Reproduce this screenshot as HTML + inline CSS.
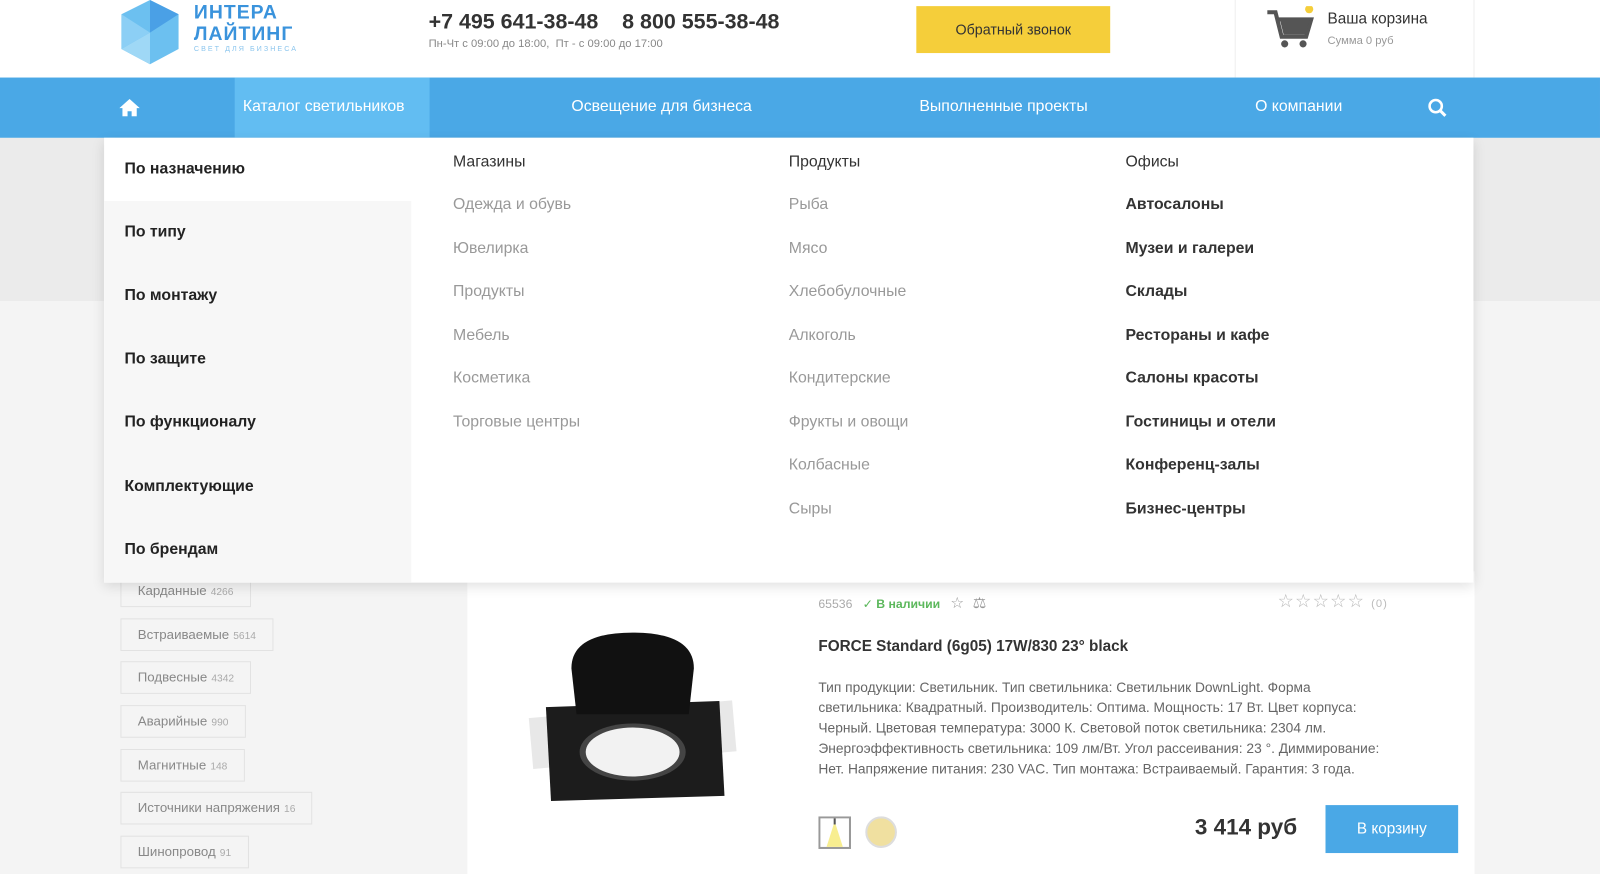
<!DOCTYPE html>
<html><head><meta charset="utf-8"><style>
*{margin:0;padding:0;box-sizing:border-box}
html,body{width:1600px;height:874px;overflow:hidden}
body{background:#f4f4f4;font-family:"Liberation Sans","DejaVu Sans",sans-serif;color:#333}
#w{position:relative;width:1568px;height:857px;transform:scale(1.0204);transform-origin:0 0}
.abs{position:absolute}
header{position:absolute;left:0;top:0;width:1568px;height:76px;background:#fff}
nav{position:absolute;left:0;top:76px;width:1568px;height:59px;background:#4aa8e6;color:#fff;font-size:15.5px}
nav span{position:absolute;top:20px}
.menu a{position:absolute;font-size:15.5px;text-decoration:none}
.tag{position:absolute;left:118px;height:32px;background:#f4f4f4;border:1px solid #e2e2e2;color:#888;font-size:13px;line-height:30px;padding:0 16px}
.tag small{font-size:10px;color:#aaa;margin-left:4px}
</style></head><body><div id="w">
<div class="abs" style="left:0;top:135px;width:1568px;height:160px;background:#ebebeb"></div>
<header>
<svg class="abs" style="left:117px;top:0" width="60" height="64" viewBox="0 0 60 64"><polygon points="30,0 58,14 58,48 30,63 2,48 2,14" fill="#6cc0f0"/><polygon points="30,0 58,14 30,32" fill="#4aa0e6"/><polygon points="2,48 30,32 30,63" fill="#9fd8f6"/><polygon points="2,14 30,32 2,48" fill="#8ccff5"/></svg>
<div class="abs" style="left:190px;top:2px;color:#3a93dc;font-weight:bold;font-size:19px;line-height:21px;letter-spacing:1px">ИНТЕРА<br>ЛАЙТИНГ</div>
<div class="abs" style="left:190px;top:45px;color:#8cc6ee;font-size:7px;letter-spacing:2px">СВЕТ ДЛЯ БИЗНЕСА</div>
<div class="abs" style="left:420px;top:10px;font-size:21px;font-weight:bold;color:#333">+7 495 641-38-48 &nbsp;&nbsp; 8 800 555-38-48</div>
<div class="abs" style="left:420px;top:37px;font-size:11px;color:#888">Пн-Чт с 09:00 до 18:00, &nbsp;Пт - с 09:00 до 17:00</div>
<div class="abs" style="left:898px;top:6px;width:190px;height:46px;background:#f5ce3a;font-size:14px;text-align:center;line-height:46px;color:#333">Обратный звонок</div>
<div class="abs" style="left:1210px;top:0;width:235px;height:76px;border-left:1px solid #eee;border-right:1px solid #eee"></div>
<svg class="abs" style="left:1240px;top:6px" width="48" height="42" viewBox="0 0 48 42"><path d="M2 6h8l6 24h24l5-17H13" fill="none" stroke="#555" stroke-width="4"/><path d="M14 12h30l-5 16H18z" fill="#555"/><circle cx="19" cy="37" r="3.5" fill="#555"/><circle cx="37" cy="37" r="3.5" fill="#555"/><circle cx="43" cy="3" r="4" fill="#f5ce3a"/></svg>
<div class="abs" style="left:1301px;top:10px;font-size:15px;color:#333">Ваша корзина</div>
<div class="abs" style="left:1301px;top:34px;font-size:11px;color:#999">Сумма 0 руб</div>
</header>
<nav>
<svg class="abs" style="left:116px;top:20px" width="22" height="18" viewBox="0 0 22 18"><path d="M11 1L1 10h3v8h5v-5h4v5h5v-8h3z" fill="#fff"/></svg>
<div class="abs" style="left:230px;top:0;width:191px;height:59px;background:#62bdf2"></div>
<span style="left:238px">Каталог светильников</span>
<span style="left:560px">Освещение для бизнеса</span>
<span style="left:901px">Выполненные проекты</span>
<span style="left:1230px">О компании</span>
<svg class="abs" style="left:1399px;top:20px" width="20" height="20" viewBox="0 0 20 20"><circle cx="8" cy="8" r="6" fill="none" stroke="#fff" stroke-width="2.5"/><path d="M12.5 12.5l5 5" stroke="#fff" stroke-width="3"/></svg>
</nav>
<div class="tag" style="top:563px">Карданные<small>4266</small></div>
<div class="tag" style="top:606px">Встраиваемые<small>5614</small></div>
<div class="tag" style="top:648px">Подвесные<small>4342</small></div>
<div class="tag" style="top:691px">Аварийные<small>990</small></div>
<div class="tag" style="top:734px">Магнитные<small>148</small></div>
<div class="tag" style="top:776px">Источники напряжения<small>16</small></div>
<div class="tag" style="top:819px">Шинопровод<small>91</small></div>
<div class="abs" style="left:458px;top:560px;width:987px;height:314px;background:#fff"></div>
<div class="abs" style="left:802px;top:582px;font-size:12px;color:#aaa">65536 &nbsp;&nbsp;<b style="color:#5cb85c">✓ В наличии</b> &nbsp;&nbsp;<span style="color:#999;font-size:15px">☆ &nbsp;⚖</span></div>
<div class="abs" style="left:1252px;top:579px;font-size:18px;color:#bbb;letter-spacing:1px">☆☆☆☆☆ <span style="font-size:11px">(0)</span></div>
<div class="abs" style="left:802px;top:625px;font-size:15px;font-weight:bold;color:#333">FORCE Standard (6g05) 17W/830 23° black</div>
<div class="abs" style="left:802px;top:664px;width:620px;font-size:13.5px;line-height:20px;color:#666">Тип продукции: Светильник. Тип светильника: Светильник DownLight. Форма<br>светильника: Квадратный. Производитель: Оптима. Мощность: 17 Вт. Цвет корпуса:<br>Черный. Цветовая температура: 3000 К. Световой поток светильника: 2304 лм.<br>Энергоэффективность светильника: 109 лм/Вт. Угол рассеивания: 23 °. Диммирование:<br>Нет. Напряжение питания: 230 VAC. Тип монтажа: Встраиваемый. Гарантия: 3 года.</div>
<svg class="abs" style="left:802px;top:800px" width="32" height="32"><rect x="1" y="1" width="30" height="30" fill="#fff" stroke="#999" stroke-width="2"/><polygon points="16,5 8,30 24,30" fill="#f8ee90"/><rect x="15" y="2" width="2" height="6" fill="#555"/></svg>
<div class="abs" style="left:848px;top:800px;width:31px;height:31px;border-radius:50%;background:#f0e0a0;border:2px solid #ddd"></div>
<div class="abs" style="left:1171px;top:798px;font-size:22px;font-weight:bold;color:#333">3 414 руб</div>
<div class="abs" style="left:1299px;top:789px;width:130px;height:47px;background:#4aa8e6;color:#fff;font-size:15px;text-align:center;line-height:47px">В корзину</div>
<svg class="abs" style="left:515px;top:615px" width="215" height="175" viewBox="0 0 215 175"><rect x="5" y="80" width="200" height="50" fill="#e8e8e8" transform="rotate(-5 105 105)"/><polygon points="20,78 190,72 195,165 25,170" fill="#1c1c1c"/><path d="M45 40 Q45 5 105 5 Q165 5 165 40 L160 85 L50 85 Z" fill="#111"/><ellipse cx="105" cy="122" rx="52" ry="28" fill="#444"/><ellipse cx="105" cy="122" rx="46" ry="24" fill="#f2f2f2"/></svg>
<div class="abs" style="left:102px;top:135px;width:1342px;height:436px;background:#fff;box-shadow:0 4px 12px rgba(0,0,0,.12)"></div>
<div class="abs" style="left:102px;top:197px;width:301px;height:374px;background:#f7f7f7"></div>
<div class="menu" style="font-weight:bold;color:#222">
<a style="left:122px;top:157px">По назначению</a>
<a style="left:122px;top:219px">По типу</a>
<a style="left:122px;top:281px">По монтажу</a>
<a style="left:122px;top:343px">По защите</a>
<a style="left:122px;top:405px">По функционалу</a>
<a style="left:122px;top:468px">Комплектующие</a>
<a style="left:122px;top:530px">По брендам</a>
</div>
<div class="menu" style="color:#999">
<a style="left:444px;top:150px;color:#333">Магазины</a>
<a style="left:444px;top:192px">Одежда и обувь</a>
<a style="left:444px;top:235px">Ювелирка</a>
<a style="left:444px;top:277px">Продукты</a>
<a style="left:444px;top:320px">Мебель</a>
<a style="left:444px;top:362px">Косметика</a>
<a style="left:444px;top:405px">Торговые центры</a>
<a style="left:773px;top:150px;color:#333">Продукты</a>
<a style="left:773px;top:192px">Рыба</a>
<a style="left:773px;top:235px">Мясо</a>
<a style="left:773px;top:277px">Хлебобулочные</a>
<a style="left:773px;top:320px">Алкоголь</a>
<a style="left:773px;top:362px">Кондитерские</a>
<a style="left:773px;top:405px">Фрукты и овощи</a>
<a style="left:773px;top:447px">Колбасные</a>
<a style="left:773px;top:490px">Сыры</a>
</div>
<div class="menu" style="color:#333;font-weight:bold">
<a style="left:1103px;top:150px;font-weight:normal">Офисы</a>
<a style="left:1103px;top:192px">Автосалоны</a>
<a style="left:1103px;top:235px">Музеи и галереи</a>
<a style="left:1103px;top:277px">Склады</a>
<a style="left:1103px;top:320px">Рестораны и кафе</a>
<a style="left:1103px;top:362px">Салоны красоты</a>
<a style="left:1103px;top:405px">Гостиницы и отели</a>
<a style="left:1103px;top:447px">Конференц-залы</a>
<a style="left:1103px;top:490px">Бизнес-центры</a>
</div>
</div></body></html>
